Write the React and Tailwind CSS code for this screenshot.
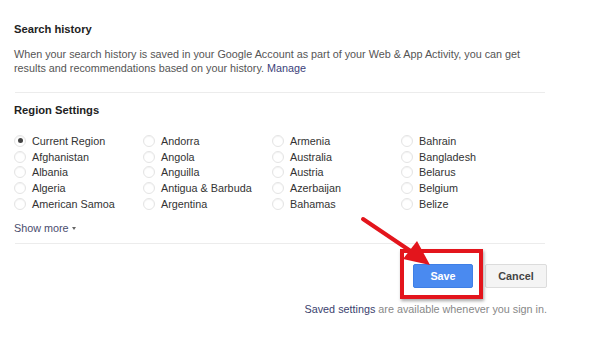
import React from "react";

const regions = [
  ["Current Region", "Andorra", "Armenia", "Bahrain"],
  ["Afghanistan", "Angola", "Australia", "Bangladesh"],
  ["Albania", "Anguilla", "Austria", "Belarus"],
  ["Algeria", "Antigua & Barbuda", "Azerbaijan", "Belgium"],
  ["American Samoa", "Argentina", "Bahamas", "Belize"],
];

const Radio = ({ label, checked }) => (
  <div className="flex items-center h-[15.75px]">
    <span className="w-[12px] h-[12px] rounded-full border border-[#e4e4e4] shadow-[inset_0_1px_1px_rgba(0,0,0,0.05)] flex items-center justify-center shrink-0">
      {checked && <span className="w-[5px] h-[5px] rounded-full bg-[#444]" />}
    </span>
    <span className="ml-[6px] text-[#333] whitespace-nowrap">{label}</span>
  </div>
);

export default function App() {
  return (
    <div className="w-[600px] h-[363px] bg-white relative overflow-hidden font-['Liberation_Sans',Arial,sans-serif] text-[10.8px] leading-[14px]">
      <div className="pl-[14px] pr-[53px] pt-[22px]">
        <h2 className="font-bold text-[11.2px] leading-[14px] text-[#222]">Search history</h2>
        <p className="mt-[11px] leading-[14px] text-[#555]">
          When your search history is saved in your Google Account as part of your Web &amp; App Activity, you can get
          <br />
          results and recommendations based on your history. <span className="text-[#3b3f7a]">Manage</span>
        </p>
        <div className="mt-[17px] ml-[1px] mr-[2px] border-t border-[#ececec]" />
        <h2 className="mt-[10px] font-bold text-[11.2px] leading-[14px] text-[#222]">Region Settings</h2>
        <div className="mt-[16px] grid grid-cols-[129px_129px_129px_129px]">
          {regions.map((row, r) =>
            row.map((name, c) => <Radio key={r + "-" + c} label={name} checked={r === 0 && c === 0} />)
          )}
        </div>
        <div className="mt-[9px] flex items-center text-[#4a4d6e]">
          Show more
          <span className="ml-[3px] mt-[1px] w-0 h-0 border-l-[2.5px] border-r-[2.5px] border-t-[3px] border-l-transparent border-r-transparent border-t-[#666]" />
        </div>
        <div className="mt-[8px] ml-[1px] mr-[2px] border-t border-[#ececec]" />
        <div className="mt-[20px] flex justify-end">
          <button className="w-[60px] h-[24px] rounded-[2px] bg-[#4a8af0] border border-[#3f7fe6] text-white font-bold text-[10.8px]">
            Save
          </button>
          <button className="ml-[12px] w-[62px] h-[24px] rounded-[2px] bg-[#f4f4f4] border border-[#dcdcdc] text-[#444] font-bold text-[10.8px]">
            Cancel
          </button>
        </div>
        <p className="mt-[14px] text-right text-[#888]">
          <span className="text-[#3b3f6e]">Saved settings</span> are available whenever you sign in.
        </p>
      </div>

      <div className="absolute left-[400px] top-[249px] w-[83px] h-[50px] border-[4px] border-[#e3151c] shadow-[1px_2px_3px_rgba(0,0,0,0.35)]" />
      <svg className="absolute left-0 top-0" width="600" height="363" viewBox="0 0 600 363">
        <line x1="363" y1="219" x2="412" y2="252" stroke="#e3151c" strokeWidth="4" strokeLinecap="round" />
        <polygon points="430,265 403,259 417,241" fill="#e3151c" />
      </svg>
    </div>
  );
}
